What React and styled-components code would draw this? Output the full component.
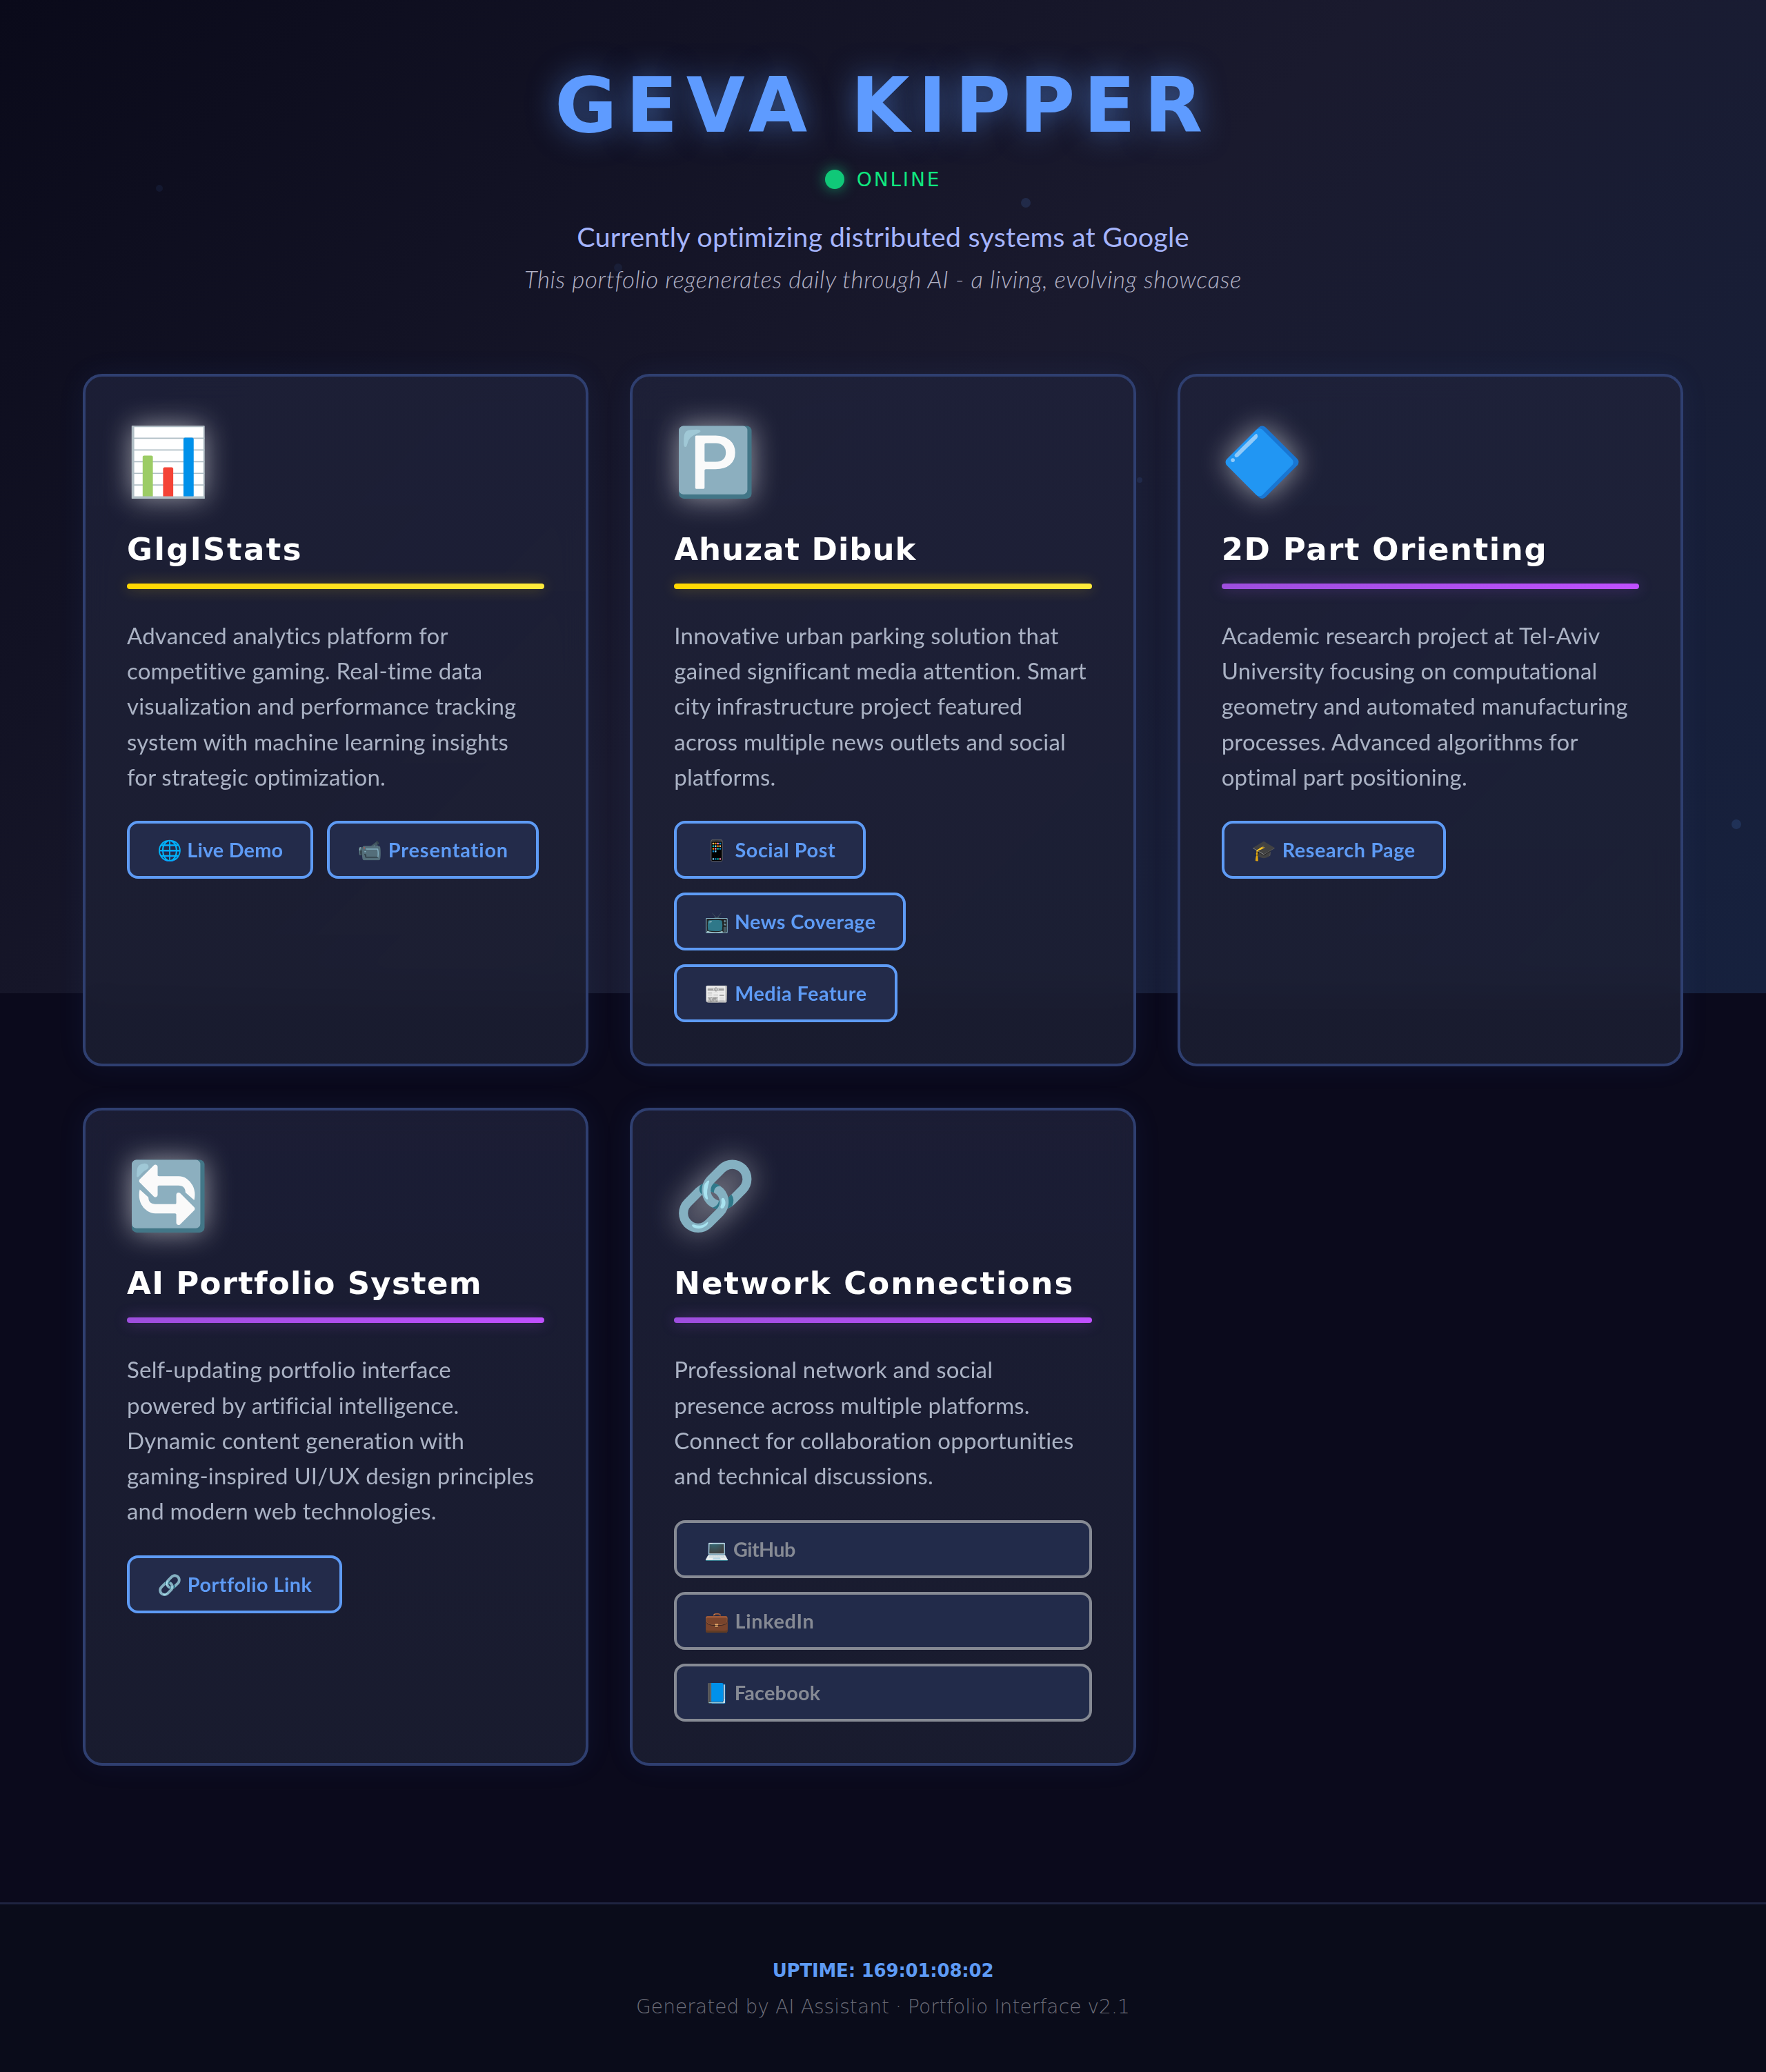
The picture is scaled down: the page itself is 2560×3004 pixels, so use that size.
import React from "react";
import styled, { createGlobalStyle } from "styled-components";

const Global = createGlobalStyle`
  html, body { margin: 0; padding: 0; }
  body {
    background: #0b0a1c linear-gradient(135deg, #0a0a1a 0%, #1a1a2e 50%, #16213e 100%) top left / 100% 1440px no-repeat;
    font-family: "Lato", "Noto Color Emoji", sans-serif;
    color: #fff;
  }
`;

const Page = styled.div`
  position: relative;
  width: 2560px;
  height: 3004px;
  overflow: hidden;
  display: flex;
  flex-direction: column;
`;

const Particle = styled.span`
  position: absolute;
  width: ${(p) => p.$s}px;
  height: ${(p) => p.$s}px;
  border-radius: 50%;
  background: #5e9bff;
  opacity: ${(p) => p.$o};
`;

const Header = styled.header`
  display: flex;
  flex-direction: column;
  align-items: center;
  padding: 86px 0 112px;
`;

const Name = styled.h1`
  margin: 0;
  font-family: "DejaVu Sans", sans-serif;
  font-weight: 700;
  font-size: 110px;
  line-height: 134px;
  letter-spacing: 12.5px;
  color: #5e9bff;
  text-shadow: 0 0 44px rgba(94, 155, 255, 0.5);
`;

const Status = styled.div`
  display: flex;
  align-items: center;
  gap: 18px;
  height: 40px;
  margin-top: 20px;
`;

const Dot = styled.span`
  width: 28px;
  height: 28px;
  border-radius: 50%;
  background: #10c878;
  box-shadow: 0 0 20px rgba(16, 220, 130, 0.6);
`;

const StatusText = styled.span`
  font-family: "DejaVu Sans", sans-serif;
  font-size: 28px;
  font-weight: 400;
  letter-spacing: 2.8px;
  color: #10e880;
`;

const Sub = styled.p`
  margin: 33px 0 0;
  font-size: 39.6px;
  letter-spacing: 0.2px;
  line-height: 60px;
  color: #a5b4fc;
  font-weight: 400;
`;

const Tagline = styled.p`
  margin: 6px 0 1px;
  font-size: 35px;
  letter-spacing: 0.6px;
  line-height: 50px;
  font-style: italic;
  font-weight: 300;
  color: #b0b0c4;
`;

const Grid = styled.main`
  display: grid;
  grid-template-columns: repeat(3, 1fr);
  gap: 60px;
  padding: 0 120px;
`;

const Card = styled.article`
  border: 4px solid #2f3f70;
  border-radius: 28px;
  padding: 60px;
  background: linear-gradient(180deg, rgba(31, 34, 58, 0.82), rgba(28, 31, 50, 0.85));
  backdrop-filter: blur(20px);
  box-shadow: 0 0 40px rgba(60, 110, 220, 0.08);
  display: flex;
  flex-direction: column;
  align-items: stretch;
`;

const Icon = styled.div`
  height: 154px;
  font-size: 96px;
  line-height: 119px;
  filter: drop-shadow(0 0 20px rgba(255, 255, 255, 0.55));
  align-self: flex-start;
`;

const CardTitle = styled.h2`
  margin: 0;
  font-family: "DejaVu Sans", sans-serif;
  font-size: 45px;
  font-weight: 700;
  line-height: 74px;
  letter-spacing: ${(p) => p.$track}px;
  color: #fff;
`;

const Rule = styled.div`
  height: 8px;
  margin-top: 12px;
  border-radius: 4px;
  background: ${(p) =>
    p.$accent === "gold"
      ? "linear-gradient(90deg, #ffd700, #ffeb3b)"
      : "linear-gradient(90deg, #9d4edd, #bf50ff)"};
  box-shadow: 0 0 20px
    ${(p) => (p.$accent === "gold" ? "rgba(255, 215, 0, 0.3)" : "rgba(168, 85, 247, 0.35)")};
`;

const Text = styled.p`
  margin: 42px 0 0;
  font-size: 33px;
  letter-spacing: 0.2px;
  line-height: 51.2px;
  color: #aab2c4;
  white-space: nowrap;
`;

const Links = styled.div`
  display: flex;
  flex-wrap: wrap;
  gap: 20px;
  margin-top: 38.4px;
  ${(p) => p.$stack && "flex-direction: column; align-items: flex-start; flex-wrap: nowrap;"}
`;

const LinkBtn = styled.a`
  display: inline-block;
  box-sizing: border-box;
  height: 84px;
  padding: 0 40px;
  border: 4px solid ${(p) => (p.$muted ? "#868a94" : "#5e9bf5")};
  border-radius: 16px;
  background: ${(p) => (p.$muted ? "#222b4a" : "#232b4a")};
  color: ${(p) => (p.$muted ? "#868a94" : "#5e9bf5")};
  font-size: 28.8px;
  font-weight: 700;
  line-height: 76px;
  white-space: nowrap;
  letter-spacing: ${(p) => p.$track}px;
  flex: ${(p) => (p.$muted ? "1 0 100%" : "0 0 auto")};
`;

const Footer = styled.footer`
  margin-top: auto;
  height: 246px;
  box-sizing: border-box;
  border-top: 3px solid #1f2440;
  background: #0a0c1a;
  display: flex;
  flex-direction: column;
  align-items: center;
  padding-top: 76px;
`;

const Uptime = styled.div`
  font-family: "DejaVu Sans", sans-serif;
  font-weight: 700;
  font-size: 26px;
  letter-spacing: -0.2px;
  line-height: 40px;
  color: #5e9bf5;
`;

const Generated = styled.div`
  margin-top: 13px;
  font-family: "DejaVu Sans", sans-serif;
  font-weight: 200;
  font-size: 28px;
  letter-spacing: 0.1px;
  line-height: 40px;
  color: #6c6c78;
`;

const projects = [
  {
    icon: "📊", title: "GlglStats", track: 2.5, accent: "gold",
    lines: ["Advanced analytics platform for", "competitive gaming. Real-time data", "visualization and performance tracking", "system with machine learning insights", "for strategic optimization."],
    links: [["🌐 Live Demo", 0.2], ["📹 Presentation", 0.9]],
  },
  {
    icon: "🅿️", title: "Ahuzat Dibuk", track: 0.95, accent: "gold",
    lines: ["Innovative urban parking solution that", "gained significant media attention. Smart", "city infrastructure project featured", "across multiple news outlets and social", "platforms."],
    links: [["📱 Social Post", 0.6], ["📺 News Coverage", 0.35], ["📰 Media Feature", 0.5]], stack: true,
  },
  {
    icon: "🔷", title: "2D Part Orienting", track: 1.6, accent: "purple",
    lines: ["Academic research project at Tel-Aviv", "University focusing on computational", "geometry and automated manufacturing", "processes. Advanced algorithms for", "optimal part positioning."],
    links: [["🎓 Research Page", 0.6]],
  },
  {
    icon: "🔄", title: "AI Portfolio System", track: 1.3, accent: "purple",
    lines: ["Self-updating portfolio interface", "powered by artificial intelligence.", "Dynamic content generation with", "gaming-inspired UI/UX design principles", "and modern web technologies."],
    links: [["🔗 Portfolio Link", 0.5]],
  },
  {
    icon: "🔗", title: "Network Connections", track: 2, accent: "purple",
    lines: ["Professional network and social", "presence across multiple platforms.", "Connect for collaboration opportunities", "and technical discussions."],
    links: [["💻 GitHub", -0.6], ["💼 LinkedIn", 0.7], ["📘 Facebook", 0.24]], muted: true,
  },
];

const particles = [
  { x: 1480, y: 287, s: 14, o: 0.14 },
  { x: 890, y: 382, s: 12, o: 0.08 },
  { x: 226, y: 268, s: 10, o: 0.08 },
  { x: 2510, y: 1188, s: 14, o: 0.14 },
  { x: 1648, y: 692, s: 8, o: 0.1 },
];

export default function App() {
  return (
    <Page>
      <Global />
      {particles.map((p, i) => (
        <Particle key={i} $s={p.s} $o={p.o} style={{ left: p.x, top: p.y }} />
      ))}
      <Header>
        <Name>GEVA KIPPER</Name>
        <Status>
          <Dot />
          <StatusText>ONLINE</StatusText>
        </Status>
        <Sub>Currently optimizing distributed systems at Google</Sub>
        <Tagline>This portfolio regenerates daily through AI - a living, evolving showcase</Tagline>
      </Header>
      <Grid>
        {projects.map((p) => (
          <Card key={p.title}>
            <Icon>{p.icon}</Icon>
            <CardTitle $track={p.track}>{p.title}</CardTitle>
            <Rule $accent={p.accent} />
            <Text>
              {p.lines.map((l, i) => (
                <React.Fragment key={i}>
                  {l}
                  {i < p.lines.length - 1 && <br />}
                </React.Fragment>
              ))}
            </Text>
            <Links $stack={p.stack}>
              {p.links.map(([label, track]) => (
                <LinkBtn key={label} $muted={p.muted} $track={track}>{label}</LinkBtn>
              ))}
            </Links>
          </Card>
        ))}
      </Grid>
      <Footer>
        <Uptime>UPTIME: 169:01:08:02</Uptime>
        <Generated>Generated by AI Assistant · Portfolio Interface v2.1</Generated>
      </Footer>
    </Page>
  );
}
